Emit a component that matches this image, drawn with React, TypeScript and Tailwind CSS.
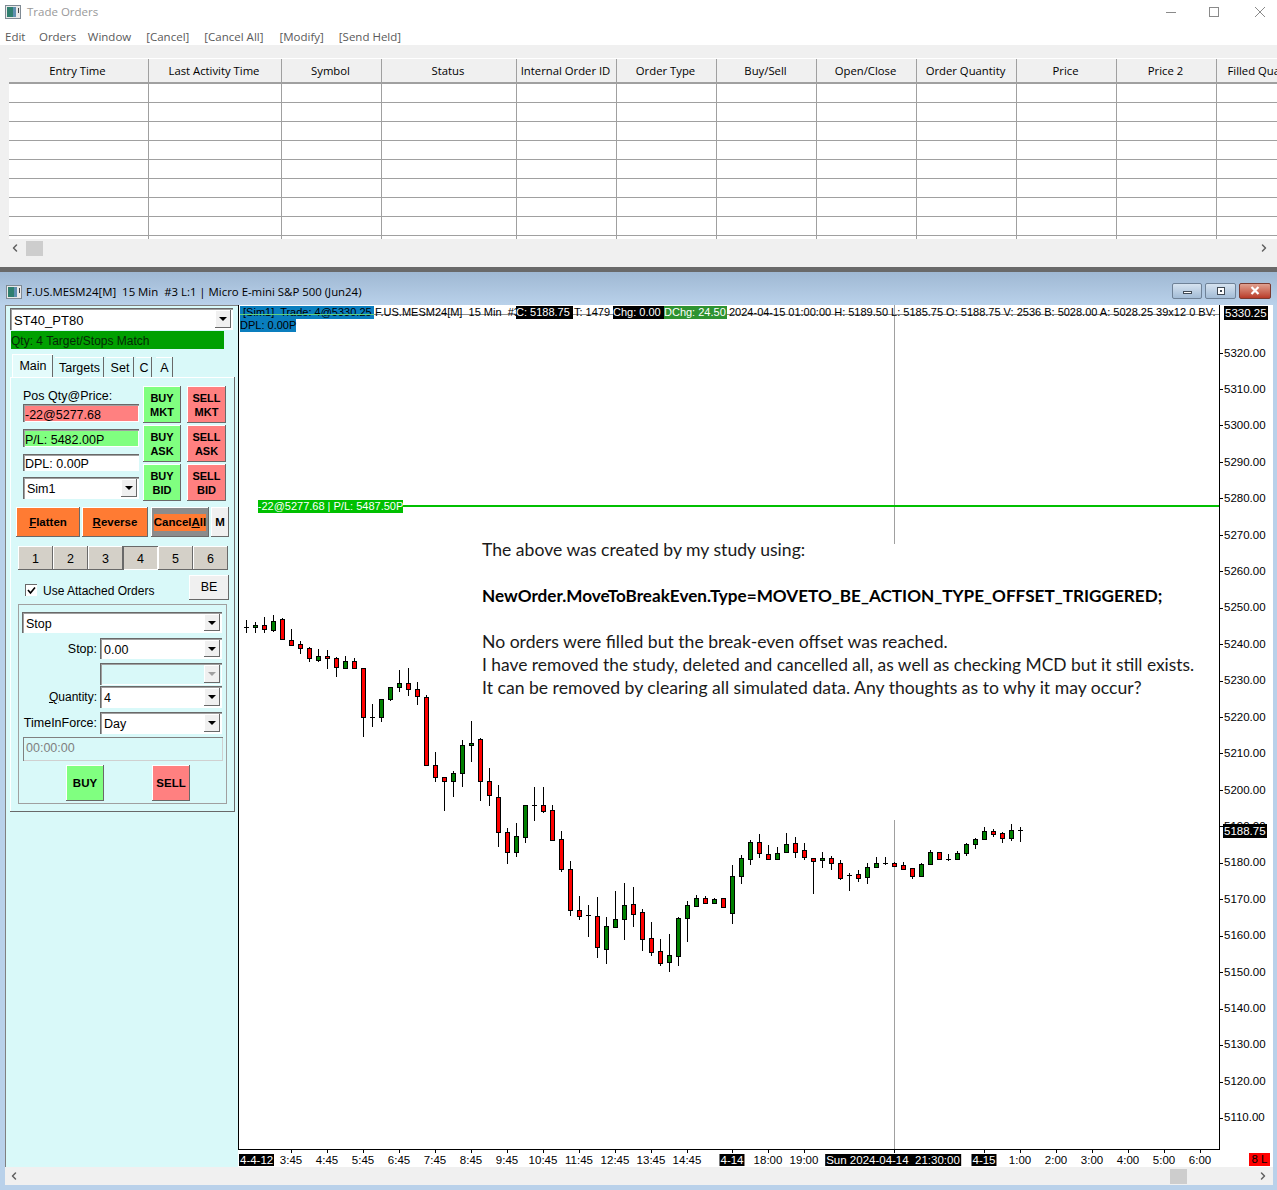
import { ChevronLeft, ChevronRight } from 'lucide-react';
import type { ReactNode } from 'react';

const raised = 'shadow-[inset_-1px_-1px_0_#696969,inset_1px_1px_0_#ffffff]';
const sunken = 'shadow-[inset_1px_1px_0_#696969,inset_2px_2px_0_#a0a0a0,inset_-1px_-1px_0_#ffffff]';

const columns = [
    ['Entry Time', 140],
    ['Last Activity Time', 133],
    ['Symbol', 100],
    ['Status', 135],
    ['Internal Order ID', 100],
    ['Order Type', 100],
    ['Buy/Sell', 100],
    ['Open/Close', 100],
    ['Order Quantity', 100],
    ['Price', 100],
    ['Price 2', 100],
    ['Filled Quantity', 100],
] as const;

// wick top, body top, body bottom, wick bottom, colour (r, g, or d for a doji)
const candles: [number, number, number, number, string][] = [
    [620, 627, 628, 632, 'd'], [622, 625, 627, 632, 'g'], [617, 625, 629, 632, 'r'], [615, 621, 630, 631, 'g'],
    [618, 619, 639, 639, 'r'], [629, 640, 645, 645, 'r'], [641, 644, 648, 653, 'r'], [647, 648, 658, 661, 'r'],
    [649, 656, 660, 661, 'g'], [650, 656, 658, 668, 'r'], [657, 658, 667, 676, 'r'], [656, 661, 668, 668, 'g'],
    [658, 661, 668, 668, 'r'], [668, 668, 717, 736, 'r'], [704, 717, 718, 726, 'd'], [699, 699, 717, 721, 'g'],
    [687, 687, 699, 700, 'g'], [670, 683, 687, 691, 'g'], [668, 683, 689, 695, 'r'], [682, 689, 696, 704, 'r'],
    [695, 697, 765, 765, 'r'], [752, 765, 777, 781, 'r'], [777, 777, 781, 810, 'r'], [771, 773, 781, 796, 'g'],
    [740, 745, 773, 786, 'g'], [721, 743, 745, 761, 'g'], [738, 739, 781, 800, 'r'], [768, 781, 795, 805, 'r'],
    [785, 797, 832, 846, 'r'], [828, 832, 852, 863, 'r'], [823, 836, 852, 856, 'g'], [805, 805, 837, 842, 'g'],
    [787, 805, 806, 820, 'd'], [787, 805, 811, 812, 'r'], [805, 810, 840, 840, 'r'], [831, 839, 869, 871, 'r'],
    [861, 869, 910, 915, 'r'], [896, 910, 916, 919, 'r'], [905, 915, 916, 936, 'd'], [897, 916, 947, 957, 'r'],
    [917, 926, 949, 963, 'g'], [891, 919, 927, 927, 'g'], [883, 905, 919, 939, 'g'], [887, 904, 914, 926, 'r'],
    [909, 912, 939, 950, 'r'], [922, 938, 952, 955, 'r'], [939, 951, 963, 965, 'r'], [934, 955, 962, 971, 'g'],
    [917, 918, 956, 965, 'g'], [901, 905, 918, 941, 'g'], [895, 898, 906, 906, 'g'], [896, 898, 903, 903, 'r'],
    [898, 899, 903, 903, 'g'], [898, 898, 907, 907, 'r'], [865, 876, 913, 923, 'g'], [855, 858, 876, 883, 'g'],
    [840, 842, 859, 864, 'g'], [834, 842, 853, 857, 'r'], [845, 854, 859, 859, 'r'], [847, 853, 859, 859, 'g'],
    [833, 844, 852, 852, 'g'], [837, 843, 852, 857, 'r'], [843, 850, 857, 859, 'r'], [858, 858, 861, 893, 'r'],
    [852, 858, 860, 867, 'g'], [856, 858, 863, 869, 'r'], [860, 863, 878, 879, 'r'], [873, 875, 877, 890, 'd'],
    [870, 874, 878, 881, 'r'], [863, 867, 877, 883, 'g'], [857, 863, 867, 867, 'g'], [857, 863, 864, 864, 'd'],
    [862, 863, 866, 866, 'r'], [862, 865, 869, 869, 'r'], [868, 868, 876, 878, 'r'], [863, 864, 876, 876, 'g'],
    [850, 852, 864, 864, 'g'], [852, 852, 859, 859, 'r'], [854, 859, 860, 860, 'd'], [851, 853, 859, 859, 'g'],
    [843, 844, 853, 855, 'g'], [838, 839, 844, 848, 'g'], [827, 831, 839, 839, 'g'], [829, 831, 834, 836, 'r'],
    [832, 833, 838, 842, 'r'], [824, 830, 838, 840, 'g'], [827, 830, 831, 841, 'd'],
];

const prices = Array.from({ length: 22 }, (_, i) => 5320 - i * 10);

const times: [string, number, boolean?][] = [
    ['3:45', 291], ['4:45', 327], ['5:45', 363], ['6:45', 399], ['7:45', 435], ['8:45', 471], ['9:45', 507],
    ['10:45', 543], ['11:45', 579], ['12:45', 615], ['13:45', 651], ['14:45', 687], ['4-14', 732, true],
    ['18:00', 768], ['19:00', 804], ['Sun 2024-04-14  21:30:00', 893, true], ['4-15', 984, true],
    ['1:00', 1020], ['2:00', 1056], ['3:00', 1092], ['4:00', 1128], ['5:00', 1164], ['6:00', 1200],
];

function WindowIcon() {
    return (
        <svg width="16" height="14" viewBox="0 0 16 14" className="shrink-0">
            <rect x="0.5" y="0.5" width="15" height="13" fill="#e8e8e8" stroke="#7f8a94" />
            <rect x="2" y="2" width="6" height="10" fill="#2f7f6f" />
            <rect x="8" y="2" width="3" height="10" fill="#5f8fb0" />
            <rect x="13" y="3" width="1" height="5" fill="#444" />
        </svg>
    );
}

function ArrowBox({ disabled }: { disabled?: boolean }) {
    return (
        <div className={`flex h-full w-[16px] shrink-0 items-center justify-center bg-[#f0f0f0] ${raised}`}>
            <div className={`h-0 w-0 border-x-[4px] border-t-[4px] border-x-transparent ${disabled ? 'border-t-[#a0a0a0]' : 'border-t-black'}`} />
        </div>
    );
}

function Combo({ value, className, disabled }: { value?: ReactNode; className: string; disabled?: boolean }) {
    return (
        <div className={`flex items-stretch p-[2px] text-[12.5px] text-black ${disabled ? 'bg-[#d9f9f9]' : 'bg-white'} ${sunken} ${className}`}>
            <div className="min-w-0 flex-1 self-center pt-[3px] pl-[2px]">{value}</div>
            <ArrowBox disabled={disabled} />
        </div>
    );
}

function OrderButton({ top, bottom, tone }: { top: string; bottom: string; tone: 'buy' | 'sell' }) {
    return (
        <div className={`flex h-[37px] flex-col items-center justify-center text-[11px] leading-[14px] font-bold text-black ${tone === 'buy' ? 'bg-[#80ff80]' : 'bg-[#ff8080]'} ${raised}`}>
            <span>{top}</span>
            <span>{bottom}</span>
        </div>
    );
}

function ValueBox({ children, className }: { children: ReactNode; className: string }) {
    return (
        <div className={`flex items-center pt-[4px] pl-[2px] text-[12.5px] text-black ${sunken} ${className}`}>{children}</div>
    );
}

function ScrollBar({ left, thumb, right, className }: { left: string; thumb: string; right: string; className: string }) {
    return (
        <div className={`flex items-center bg-[#f0f0f0] ${className}`}>
            <ChevronLeft size={12} strokeWidth={3} className={`shrink-0 text-[#606060] ${left}`} />
            <div className={`h-[15px] w-[17px] shrink-0 bg-[#cdcdcd] ${thumb}`} />
            <ChevronRight size={12} strokeWidth={3} className={`shrink-0 text-[#606060] ${right}`} />
        </div>
    );
}

function OrdersWindow() {
    return (
        <div className="flex h-[267px] flex-col bg-[#f0f0f0] [font-family:'Open_Sans',sans-serif]">
            <div className="flex h-[24px] items-center bg-white pl-[5px] text-[11.5px] text-[#999999]">
                <WindowIcon />
                <span className="ml-[6px]">Trade Orders</span>
                <div className="ml-auto flex items-center">
                    <div className="h-[1px] w-[10px] bg-[#8a8a8a]" />
                    <div className="ml-[33px] h-[10px] w-[10px] border border-[#8a8a8a]" />
                    <svg width="12" height="12" viewBox="0 0 12 12" className="mr-[11px] ml-[35px]">
                        <path d="M1 1 L11 11 M11 1 L1 11" stroke="#8a8a8a" strokeWidth="1" />
                    </svg>
                </div>
            </div>
            <div className="flex h-[21px] items-center bg-white pt-[5px] pl-[5px] text-[11.5px] text-[#5a5a5a]">
                <span>Edit</span>
                <span className="ml-[13.5px]">Orders</span>
                <span className="ml-[11.5px]">Window</span>
                <span className="ml-[15px]">[Cancel]</span>
                <span className="ml-[15px]">[Cancel All]</span>
                <span className="ml-[16px]">[Modify]</span>
                <span className="ml-[15px]">[Send Held]</span>
            </div>
            <div className="mt-[13px] ml-[9px] overflow-hidden">
                <div className="flex h-[26px] border-t border-b-2 border-t-white border-b-[#a0a0a0]">
                    {columns.map(([name, width]) => (
                        <div
                            key={name}
                            style={{ width }}
                            className="flex shrink-0 items-center justify-center border-r border-[#a0a0a0] pt-[2px] pr-[2px] text-[11.3px] whitespace-nowrap text-black"
                        >
                            {name}
                        </div>
                    ))}
                </div>
                {Array.from({ length: 9 }, (_, row) => (
                    <div key={row} className={`flex bg-white ${row === 8 ? 'h-[3px]' : 'h-[19px] border-b border-[#a0a0a0]'}`}>
                        {columns.map(([name, width]) => (
                            <div key={name} style={{ width }} className="shrink-0 border-r border-[#a0a0a0]" />
                        ))}
                    </div>
                ))}
            </div>
            <ScrollBar className="mt-[1px] h-[16px]" left="ml-[9px]" thumb="ml-[5px]" right="ml-[1215px]" />
        </div>
    );
}

function TradePanel() {
    return (
        <div className="h-[862px] w-[233px] shrink-0 bg-[#d9f9f9] pt-[1px] shadow-[inset_1px_1px_0_#808080] [font-family:'Liberation_Sans',sans-serif]">
            <Combo value={<span className="text-[13px]">ST40_PT80</span>} className="mt-[2px] ml-[5px] h-[22px] w-[223px]" />
            <div className="mt-[1px] ml-[6px] flex h-[18px] w-[213px] items-center bg-[#00a000] pt-[2px] text-[12px] text-[#062806]">
                Qty: 4 Target/Stops Match
            </div>
            <div className="mt-[5px] ml-[7px] flex h-[23px] items-end text-[12.5px] text-black">
                <div className="flex h-[23px] w-[41px] items-center justify-center border-t border-l border-white bg-[#e4fbfb] shadow-[inset_-1px_0_0_#696969]">Main</div>
                <div className="ml-[2px] flex h-[20px] w-[49px] items-center justify-center pt-[2px] shadow-[inset_-1px_0_0_#696969,inset_0_1px_0_#ffffff]">Targets</div>
                <div className="ml-[2px] flex h-[20px] w-[28px] items-center justify-center pt-[2px] shadow-[inset_-1px_0_0_#696969,inset_0_1px_0_#ffffff]">Set</div>
                <div className="ml-[2px] flex h-[20px] w-[16px] items-center justify-center pt-[2px] shadow-[inset_-1px_0_0_#696969,inset_0_1px_0_#ffffff]">C</div>
                <div className="ml-[4px] flex h-[20px] w-[17px] items-center justify-center pt-[2px] shadow-[inset_-1px_0_0_#696969,inset_0_1px_0_#ffffff]">A</div>
            </div>
            <div className={`ml-[5px] h-[435px] w-[225px] pt-[9px] text-black ${raised}`}>
                <div className="ml-[13px] flex">
                    <div className="w-[116px]">
                        <div className="flex h-[18px] items-center pt-[2px] text-[12.5px]">Pos Qty@Price:</div>
                        <ValueBox className="h-[18px] bg-[#ff8080]">-22@5277.68</ValueBox>
                        <ValueBox className="mt-[7px] h-[18px] bg-[#80ff80]">P/L: 5482.00P</ValueBox>
                        <ValueBox className="mt-[7px] h-[17px] bg-white">DPL: 0.00P</ValueBox>
                        <Combo value="Sim1" className="mt-[6px] h-[22px]" />
                    </div>
                    <div className="ml-[4px] flex w-[38px] flex-col gap-[2px]">
                        <OrderButton top="BUY" bottom="MKT" tone="buy" />
                        <OrderButton top="BUY" bottom="ASK" tone="buy" />
                        <OrderButton top="BUY" bottom="BID" tone="buy" />
                    </div>
                    <div className="ml-[6px] flex w-[39px] flex-col gap-[2px]">
                        <OrderButton top="SELL" bottom="MKT" tone="sell" />
                        <OrderButton top="SELL" bottom="ASK" tone="sell" />
                        <OrderButton top="SELL" bottom="BID" tone="sell" />
                    </div>
                </div>
                <div className="mt-[6px] ml-[6px] flex h-[30px] text-[11.5px] font-bold">
                    <div className={`flex w-[64px] items-center justify-center bg-[#ff7b33] pt-[1px] ${raised}`}><span><u>F</u>latten</span></div>
                    <div className={`ml-[2px] flex w-[66px] items-center justify-center bg-[#ff7b33] pt-[1px] ${raised}`}><span><u>R</u>everse</span></div>
                    <div className={`ml-[3px] flex w-[58px] items-center justify-center bg-[#8c8c8c] pt-[1px] ${raised}`}>
                        <span className="bg-[#ff7b33]">Cancel<u>A</u>ll</span>
                    </div>
                    <div className={`ml-[2px] flex w-[18px] items-center justify-center bg-[#f0f0f0] pt-[1px] ${raised}`}>M</div>
                </div>
                <div className="mt-[9px] ml-[8px] flex h-[24px] text-[12.5px]">
                    {['1', '2', '3', '4', '5', '6'].map((n) => (
                        <div
                            key={n}
                            className={`flex w-[35px] items-center justify-center bg-[#d4d0c8] pt-[2px] ${n === '4' ? 'shadow-[inset_1px_1px_0_#696969,inset_-1px_-1px_0_#ffffff]' : raised}`}
                        >
                            {n}
                        </div>
                    ))}
                </div>
                <div className="mt-[5px] flex h-[25px] items-center text-[12px]">
                    <div className="mt-[5px] ml-[15px] flex h-[12px] w-[12px] items-center justify-center bg-white shadow-[inset_1px_1px_0_#696969]">
                        <svg width="9" height="9" viewBox="0 0 9 9">
                            <path d="M1 4 L3.5 7 L8 1.5" fill="none" stroke="black" strokeWidth="1.6" />
                        </svg>
                    </div>
                    <span className="mt-[7px] ml-[6px]">Use Attached Orders</span>
                    <div className={`mr-[6px] ml-auto flex h-[25px] w-[40px] items-center justify-center bg-[#f0f0f0] text-[12.5px] ${raised}`}>BE</div>
                </div>
                <div className="mt-[4px] ml-[8px] h-[200px] w-[209px] border border-[#a0a0a0] text-[12.5px]">
                    <Combo value="Stop" className="mt-[7px] ml-[3px] h-[21px] w-[200px]" />
                    <div className="mt-[5px] flex h-[21px] items-center">
                        <span className="w-[78px] pt-[1px] text-right">Stop:</span>
                        <Combo value="0.00" className="ml-[3px] h-[21px] w-[122px]" />
                    </div>
                    <div className="mt-[4px] flex h-[22px] items-center">
                        <Combo disabled className="ml-[81px] h-[22px] w-[122px]" />
                    </div>
                    <div className="mt-[1px] flex h-[22px] items-center">
                        <span className="w-[78px] text-right text-[12px]"><u>Q</u>uantity:</span>
                        <Combo value="4" className="ml-[3px] h-[22px] w-[122px]" />
                    </div>
                    <div className="mt-[4px] flex h-[22px] items-center">
                        <span className="w-[78px] text-right">TimeInForce:</span>
                        <Combo value="Day" className="ml-[3px] h-[22px] w-[122px]" />
                    </div>
                    <div className="mt-[3px] ml-[4px] flex h-[24px] w-[200px] items-center pb-[2px] pl-[3px] text-[#808080] shadow-[inset_1px_1px_0_#808080,inset_-1px_-1px_0_#d0d0d0]">00:00:00</div>
                    <div className="mt-[4px] ml-[47px] flex h-[36px] text-[11.5px] font-bold">
                        <div className={`flex w-[38px] items-center justify-center bg-[#80ff80] pt-[2px] ${raised}`}>BUY</div>
                        <div className={`ml-[48px] flex w-[38px] items-center justify-center bg-[#ff8080] pt-[2px] ${raised}`}>SELL</div>
                    </div>
                </div>
            </div>
        </div>
    );
}

function ChartPane() {
    return (
        <div className="relative h-[862px] w-[1035px] shrink-0 overflow-hidden bg-white text-[11.5px] text-black [font-family:'Liberation_Sans',sans-serif]">
            <svg width="1035" height="862" viewBox="238 305 1035 862" shapeRendering="crispEdges" className="absolute top-0 left-0">
                <rect x="238" y="305" width="1" height="844" fill="black" />
                <rect x="238" y="1149" width="982" height="1" fill="black" />
                <rect x="1219" y="305" width="1" height="845" fill="black" />
                <rect x="894" y="305" width="1" height="239" fill="#a0a0a0" />
                <rect x="894" y="820" width="1" height="329" fill="#a0a0a0" />
                <rect x="374" y="314" width="845" height="1" fill="#909090" />
                <rect x="403" y="505" width="816" height="2" fill="#00c000" />
                {prices.map((p, i) => (
                    <rect key={p} x="1220" y={Math.round(352.5 + i * 36.45)} width="3" height="1" fill="black" />
                ))}
                {times.map(([label, x]) => (
                    <rect key={label} x={label.startsWith('Sun') ? 894 : x} y="1150" width="1" height="3" fill="black" />
                ))}
                {candles.map(([wickTop, bodyTop, bodyBottom, wickBottom, colour], i) => {
                    const x = 246 + 9 * i;
                    return (
                        <g key={i}>
                            <rect x={x} y={wickTop} width="1" height={wickBottom - wickTop + 1} fill="black" />
                            {colour === 'd' ? (
                                <rect x={x - 2} y={bodyTop} width="5" height="1" fill="black" />
                            ) : (
                                <rect
                                    x={x - 2}
                                    y={bodyTop}
                                    width="4"
                                    height={bodyBottom - bodyTop}
                                    fill={colour === 'r' ? '#ff0000' : '#008000'}
                                    stroke="black"
                                    strokeWidth="1"
                                    transform="translate(0.5 0.5)"
                                />
                            )}
                        </g>
                    );
                })}
            </svg>

            <div className="absolute top-[1px] left-[2px] flex h-[13px] items-center text-[11px] leading-[13px] whitespace-pre">
                <span className="w-[134px] shrink-0 bg-[#0a7ebe]"> [Sim1]  Trade: 4@5330.25</span>
                <span className="w-[142px] shrink-0 pl-[1px]">F.US.MESM24[M]  15 Min  #3</span>
                <span className="w-[57px] shrink-0 bg-black text-white">C: 5188.75</span>
                <span className="w-[40px] shrink-0 pl-[1px]">T: 1479</span>
                <span className="w-[51px] shrink-0 bg-black text-white">Chg: 0.00</span>
                <span className="w-[63px] shrink-0 bg-[#2e9331] text-white">DChg: 24.50</span>
                <span className="w-[490px] shrink-0 pl-[2px]">2024-04-15 01:00:00 H: 5189.50 L: 5185.75 O: 5188.75 V: 2536 B: 5028.00 A: 5028.25 39x12 0 BV:</span>
            </div>
            <div className="absolute top-[9px] left-[2px] h-[1px] w-[134px] bg-[#5fd07f]" />
            <div className="absolute top-[14px] left-[2px] flex h-[13px] w-[56px] items-center bg-[#0a7ebe] text-[11px] leading-[13px] whitespace-pre">DPL: 0.00P</div>

            <div className="absolute top-[195px] left-[20px] flex h-[13px] w-[145px] items-center justify-center bg-[#00c000] text-[11px] whitespace-nowrap text-white">
                -22@5277.68 | P/L: 5487.50P
            </div>

            <div className="absolute top-[233px] left-[244px] text-[17.6px] leading-[23px] whitespace-nowrap text-[#1a1a1a] [font-family:Lato,sans-serif]">
                <p>The above was created by my study using:</p>
                <p className="mt-[23px] text-[17.15px] font-bold text-black">NewOrder.MoveToBreakEven.Type=MOVETO_BE_ACTION_TYPE_OFFSET_TRIGGERED;</p>
                <p className="mt-[23px]">No orders were filled but the break-even offset was reached.</p>
                <p className="text-[17.4px]">I have removed the study, deleted and cancelled all, as well as checking MCD but it still exists.</p>
                <p>It can be removed by clearing all simulated data. Any thoughts as to why it may occur?</p>
            </div>

            {prices.map((p, i) => (
                <span key={p} style={{ top: Math.floor(41 + i * 36.42) }} className="absolute left-[986px] leading-[14px]">{p}.00</span>
            ))}
            <span className="absolute top-[1px] left-[986px] bg-black px-[1px] leading-[14px] text-white">5330.25</span>
            <span className="absolute top-[519px] left-[985px] bg-black px-[1px] leading-[14px] text-white">5188.75</span>

            <span className="absolute top-[849px] left-[1px] bg-black px-[1px] leading-[12px] text-white">4-4-12</span>
            {times.map(([label, x, dark]) => (
                <span
                    key={label}
                    style={{ left: x - 238 }}
                    className={`absolute top-[849px] -translate-x-1/2 px-[1px] leading-[12px] whitespace-pre ${dark ? 'bg-black text-white' : ''}`}
                >
                    {label}
                </span>
            ))}
            <span className="absolute top-[848px] left-[1011px] flex h-[13px] w-[21px] items-center justify-center bg-[#ff0000] leading-[13px]">8 L</span>
        </div>
    );
}

function ChartWindow() {
    return (
        <div className="flex h-[923px] flex-col bg-[#b9d1ea]">
            <div className="h-[5px] bg-[#696969]" />
            <div className="flex h-[33px] items-center bg-gradient-to-b from-[#9fb8d3] to-[#b9d1ea] pt-[6px] pl-[6px] text-[11.4px] text-black [font-family:'Open_Sans',sans-serif]">
                <WindowIcon />
                <span className="ml-[4px] whitespace-pre">F.US.MESM24[M]  15 Min  #3 L:1 | Micro E-mini S&amp;P 500 (Jun24)</span>
                <div className="mt-[-2px] mr-[6px] ml-auto flex gap-[3px]">
                    <div className="flex h-[16px] w-[30px] items-center justify-center rounded-[2px] border border-[#6f8297] bg-gradient-to-b from-[#d6e3f0] to-[#a3bcd6]">
                        <div className="mt-[3px] h-[3px] w-[9px] border border-[#404a55] bg-white" />
                    </div>
                    <div className="flex h-[16px] w-[31px] items-center justify-center rounded-[2px] border border-[#6f8297] bg-gradient-to-b from-[#d6e3f0] to-[#a3bcd6]">
                        <div className="flex h-[8px] w-[8px] items-center justify-center border border-[#404a55] bg-white">
                            <div className="h-[2px] w-[2px] bg-[#404a55]" />
                        </div>
                    </div>
                    <div className="flex h-[16px] w-[32px] items-center justify-center rounded-[2px] border border-[#7a3a30] bg-gradient-to-b from-[#e0a090] to-[#b83a28]">
                        <svg width="10" height="9" viewBox="0 0 10 9">
                            <path d="M1.5 1 L8.5 8 M8.5 1 L1.5 8" stroke="white" strokeWidth="2.2" />
                        </svg>
                    </div>
                </div>
            </div>
            <div className="flex pl-[5px]">
                <TradePanel />
                <ChartPane />
            </div>
            <ScrollBar className="ml-[5px] h-[18px] w-[1268px]" left="ml-[3px]" thumb="ml-[1150px]" right="ml-[70px]" />
        </div>
    );
}

export default function App() {
    return (
        <div className="h-[1190px] w-[1277px] overflow-hidden bg-white">
            <OrdersWindow />
            <ChartWindow />
        </div>
    );
}
